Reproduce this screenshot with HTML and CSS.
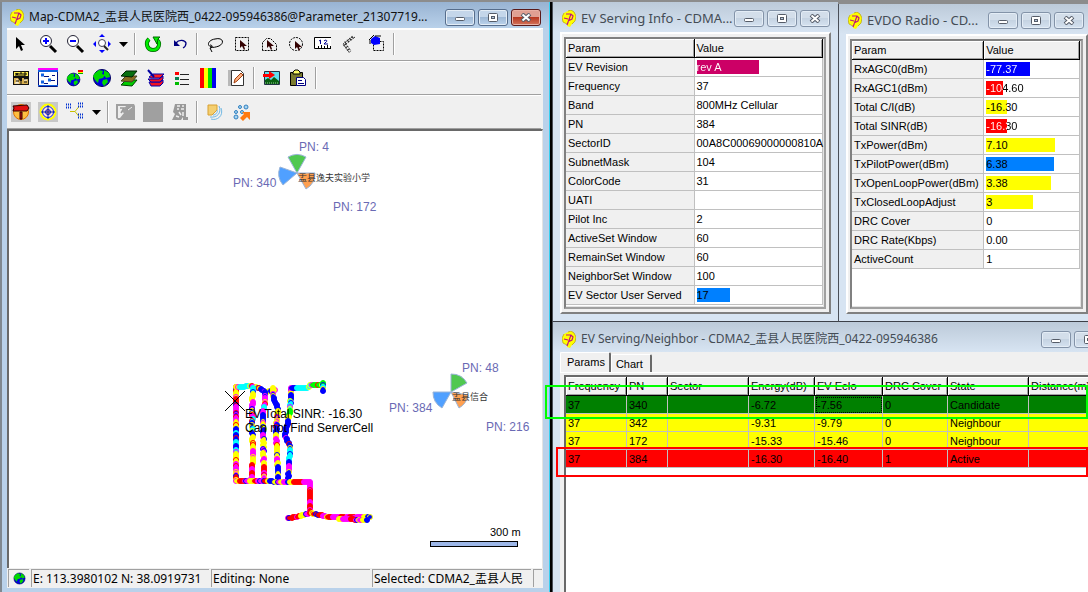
FILE: index.html
```
<!DOCTYPE html>
<html lang="zh-CN">
    <head>
        <meta charset="utf-8">
        <title>Map-CDMA2</title>
        <link rel="stylesheet" href="styles.css">
    </head>
    <body>
        <svg class="defs" aria-hidden="true">
            <symbol id="logo" viewBox="0 0 14 17">
                <path d="M6 1l3-1 3 2 2 4-1 5-3 3-2 3-3-1v-2L1 12 0 7l2-4z" fill="#ff0"/>
                <path d="M6 1l3-1 3 2 2 4-1 5-3 3M5 14L1 12 0 7l2-4" fill="none" stroke="#b8a000" stroke-width=".7"/>
                <path d="M4 4h5l2 2-1 3-4 2M9 4L5 15M2 8l4 1" fill="none" stroke="#c0147c" stroke-width="1.2"/>
            </symbol>
            <symbol id="min" viewBox="0 0 12 9"><rect x="1.5" y="4.5" width="9" height="3" rx="1" fill="#fff" stroke="#555c68"/></symbol>
            <symbol id="max" viewBox="0 0 12 9"><rect x="1.5" y=".5" width="9" height="8" rx="1" fill="#fff" stroke="#555c68"/><rect x="4.500" y="3.500" width="3" height="2" fill="#b8c8dc" stroke="#555c68"/></symbol>
            <symbol id="close" viewBox="0 0 12 9"><path d="M2 1l8 7M10 1L2 8" stroke="#555c68" stroke-width="4"/><path d="M2.500 1.500l7 6M9.500 1.500l-7 6" stroke="#fff" stroke-width="2"/></symbol>
            <symbol id="globe" viewBox="0 0 20 20">
                <circle cx="10" cy="10" r="8.500" fill="#0000e0" stroke="#000060"/>
                <path d="M3 5l4-3 4 1-1 3 3 1-2 3-4 1-1 4-3-3-2-4zM12 2l5 3 1 4-4 1-2-3zM11 12l4-1 1 3-4 4-2-3z" fill="#00d800"/>
            </symbol>
        </svg>

        <main class="desktop">
            <section class="window active map-window">
                <header class="titlebar">
                    <svg class="logo"><use href="#logo"/></svg>
                    <h1>Map-CDMA2_盂县人民医院西_0422-095946386@Parameter_21307719...</h1>
                    <button aria-label="Minimize"><svg><use href="#min"/></svg></button>
                    <button aria-label="Maximize"><svg><use href="#max"/></svg></button>
                    <button class="close" aria-label="Close"><svg><use href="#close"/></svg></button>
                </header>
                <div class="client">
                    <div class="toolbar">
                        <button aria-label="Select"><svg viewBox="0 0 20 20"><path d="M5 3v12l3-3 2 5 2-1-2-5h4z" fill="#000"/></svg></button>
                        <button aria-label="Zoom in"><svg viewBox="0 0 20 20"><path d="M12 12l6 6" stroke="#000" stroke-width="3"/><circle cx="8" cy="7" r="5.500" fill="#fff" stroke="#223"/><path d="M8 4v6M5 7h6" stroke="#00f" stroke-width="2"/></svg></button>
                        <button aria-label="Zoom out"><svg viewBox="0 0 20 20"><path d="M12 12l6 6" stroke="#000" stroke-width="3"/><circle cx="8" cy="7" r="5.500" fill="#fff" stroke="#223"/><path d="M5 7h6" stroke="#00f" stroke-width="2"/></svg></button>
                        <button aria-label="Pan"><svg viewBox="0 0 20 20"><path d="M10 0l3 3H7zM10 19l3-3H7zM1 10l3-3v6zM19 10l-3-3v6z" fill="#00f"/><circle cx="10" cy="9" r="3.500" fill="#fff" stroke="#445"/><path d="M12 12l4 4" stroke="#222" stroke-width="2"/></svg></button>
                        <button class="drop" aria-label="Pan options"><svg viewBox="0 0 9 5"><path d="M0 0h9L4.500 5z"/></svg></button>
                        <hr>
                        <button aria-label="Refresh"><svg viewBox="0 0 20 20"><path d="M6 5c-4 4-2 11 4 11s8-7 4-10" fill="none" stroke="#060" stroke-width="4"/><path d="M6 5c-4 4-2 11 4 11s8-7 4-10" fill="none" stroke="#0e0" stroke-width="2.500"/><path d="M10 3h7l-2 2-1 5z" fill="#0e0" stroke="#060"/></svg></button>
                        <button aria-label="Undo"><svg viewBox="0 0 20 20"><path d="M6 9c3-4 9-3 10 0 0 3-1 4-3 5" fill="none" stroke="#000080" stroke-width="1.300"/><path d="M4 6v6h6z" fill="#000080"/></svg></button>
                        <hr>
                        <button aria-label="Lasso"><svg viewBox="0 0 20 20"><path d="M7 13c-6-1-4-7 3-8 8-2 10 4 4 7-3 1-6 2-9 1M5 11c3 0 3 3 0 3l2 4" fill="none" stroke="#000"/></svg></button>
                        <button aria-label="Select by rectangle"><svg viewBox="0 0 20 20"><path d="M3.500 3.500h13v13h-13z" fill="none" stroke="#000" stroke-dasharray="2 1"/><path d="M8 6v8l2-2 2 4 1-1-1-3h3z" fill="#300"/></svg></button>
                        <button aria-label="Select by polygon"><svg viewBox="0 0 20 20"><path d="M3.500 16.500v-8l4-4h4l6 6v6z" fill="none" stroke="#000" stroke-dasharray="2 1"/><path d="M8 6v8l2-2 2 4 1-1-1-3h3z" fill="#300"/></svg></button>
                        <button aria-label="Select by circle"><svg viewBox="0 0 20 20"><circle cx="10" cy="10" r="6.500" fill="none" stroke="#000" stroke-dasharray="2 1"/><path d="M9 7v8l2-2 2 4 1-1-1-3h3z" fill="#300"/></svg></button>
                        <button aria-label="Ruler"><svg viewBox="0 0 20 20"><path d="M18 3.500H1.500v11H18" fill="#fff" stroke="#000"/><path d="M5.500 12v2M8.500 11v3M11.500 12v2M14.500 11v3M17.500 12v2" stroke="#000"/><path d="M6 7l1.500-1v4M11 7c2-2 4 0 2 1l-2 2h4" fill="none" stroke="#000090"/></svg></button>
                        <button aria-label="Measure"><svg viewBox="0 0 20 20"><path d="M15 3l-9 7 5 7M12 3l-9 7 6 8" fill="none" stroke="#000" stroke-dasharray="1 1"/><path d="M13 3l-9 7 6 8" fill="none" stroke="#222" stroke-dasharray="1 2" stroke-width="3"/></svg></button>
                        <button aria-label="Edit shape"><svg viewBox="0 0 20 20"><path d="M6.500 7.500h10v9h-10z" fill="none" stroke="#000" stroke-dasharray="2 1"/><path d="M4 5l4-3 5 2v6l-6 1-3-2z" fill="#00f"/><path d="M2 6l5-5M8 2h6M3 6v4" stroke="#000"/></svg></button>
                        <hr>
                    </div>
                    <div class="toolbar">
                        <button aria-label="Map search"><svg viewBox="0 0 20 20"><path d="M2 3h16v14H2z" fill="#111"/><path d="M3 4h14v4H3z" fill="#ffee50"/><path d="M5 8V5l1 2 1-2v3M9 8V5h2v3M13 8V5h2v2h-2" fill="none" stroke="#000"/><path d="M3 10h4l2 3h2v-3h2v2l4-1v5H3z" fill="#d8b050"/><path d="M4 15h4M13 12h3M6 11v4" stroke="#fff"/><path d="M5 13h3M10 12v4M13 14h3" stroke="#111"/></svg></button>
                        <button aria-label="Layer window"><svg viewBox="0 0 20 20"><path d="M.500 1.500h19v17H.500z" fill="#fff" stroke="#001080"/><path d="M0 0h20v2H0z" fill="#f0f"/><path d="M0 2h20v2H0zM0 17h20v1H0z" fill="#1060e0"/><path d="M3 7h3M10 12h3M3 14h3" stroke="#1060e0" stroke-width="3"/><path d="M6 8.500h5M13 12.500h4M6 15.500h4M14 7.500h3" stroke="#001080"/></svg></button>
                        <button aria-label="Earth legend"><svg viewBox="0 0 20 20"><use href="#globe" x="1" y="4" width="15" height="15"/><path d="M13 2h5v2h-5z" fill="red"/><path d="M13 4h5v1h-5z" fill="#ff0"/><path d="M13 5h5v1h-5z" fill="#0a0"/></svg></button>
                        <button aria-label="Earth"><svg viewBox="0 0 20 20"><use href="#globe" width="20" height="20"/></svg></button>
                        <button aria-label="Layers"><svg viewBox="0 0 20 20"><path d="M2 17l5-5h11l-5 6z" fill="#0c0" stroke="#040"/><path d="M2 13l5-5h11l-5 6z" fill="#886a20" stroke="#442"/><path d="M2 8l5-5h11l-5 6z" fill="#087010" stroke="#020"/></svg></button>
                        <button aria-label="Map layers"><svg viewBox="0 0 20 20"><path d="M3 14h11l3-2v3l-3 3H5z" fill="#f01020" stroke="#0000b0"/><path d="M2 11h11l4-3v3l-3 3H5z" fill="#f01020" stroke="#0000b0"/><path d="M3 9l4-3h11l-4 4H5z" fill="#ff2020" stroke="#0000b0"/><path d="M2 2l6 7" stroke="#0000a0" stroke-width="2"/></svg></button>
                        <button aria-label="Legend"><svg viewBox="0 0 20 20"><path d="M2 4h4v3H2z" fill="red"/><path d="M2 9h4v3H2z" fill="#0a8050"/><path d="M2 14h4v3H2z" fill="#0b0"/><path d="M7 6.500h9M7 11.500h9M7 16.500h9" stroke="#222"/></svg></button>
                        <button aria-label="Colour bars"><svg viewBox="0 0 20 20"><path d="M0 0h4v20H0z" fill="red"/><path d="M4 0h4v20H4z" fill="#ff0"/><path d="M8 0h4v20H8z" fill="#0d0"/><path d="M12 0h4v20h-4z" fill="#00e"/></svg></button>
                        <button aria-label="Edit note"><svg viewBox="0 0 20 20"><path d="M1 2h4v16H1z" fill="#b8b8b8"/><path d="M4.500 2.500h9l3 3v12h-12z" fill="#fff" stroke="#333"/><path d="M7 15l1-4 6-6 2 2-6 6z" fill="#ffb080" stroke="#a04010"/></svg></button>
                        <hr>
                        <button aria-label="Export picture"><svg viewBox="0 0 20 20"><path d="M2.500 3.500h15v13h-15z" fill="#60e0f0" stroke="#234"/><path d="M3 12l3-2 3 2 3-3 5 4v3H3z" fill="#086010"/><path d="M3 15h14" stroke="#9c9" stroke-dasharray="1 1"/><path d="M1 6h6V3l6 4-6 4V9H1z" fill="red"/></svg></button>
                        <button aria-label="Paste"><svg viewBox="0 0 20 20"><path d="M1.500 4.500h12v13h-12z" fill="#7b7b30" stroke="#000"/><path d="M4 6V4l2-2h3l2 2v2z" fill="#ff6" stroke="#000"/><path d="M7.500 9.500h7l2 2v6h-9z" fill="#fff" stroke="#000080"/><path d="M9 12.500h4M9 15.500h6" stroke="#000080"/></svg></button>
                        <hr>
                    </div>
                    <div class="toolbar">
                        <button class="on" aria-label="Direction"><svg viewBox="0 0 20 20"><circle cx="10" cy="10" r="7.500" fill="#ffc040" stroke="#e07000"/><path d="M2 4l14-1 2 3-2 3H2l1-3z" fill="#e01010" stroke="#300"/><path d="M9 10h2v7H9z" fill="#c01010" stroke="#300"/></svg></button>
                        <button class="on" aria-label="Locate"><svg viewBox="0 0 20 20"><circle cx="10" cy="10" r="7.500" fill="#ffe0d8" stroke="#ff0" stroke-width="2"/><circle cx="10" cy="10" r="5.500" fill="none" stroke="#0020e0"/><circle cx="10" cy="10" r="2.500" fill="#ff9090" stroke="#0020e0"/><path d="M10 3v14M3 10h14" stroke="#0020a0"/></svg></button>
                        <button aria-label="Link cells"><svg viewBox="0 0 20 20"><path d="M5 9.500h5l4-5M10 9.500l4 5" fill="none" stroke="#c8c000"/><path d="M1 2.500h5M1 5.500h5M13 1.500h5M13 4.500h5M13 12.500h5M13 15.500h5" stroke="#0030d0" stroke-width="2" stroke-dasharray="1 1"/></svg></button>
                        <button class="drop" aria-label="Link options"><svg viewBox="0 0 9 5"><path d="M0 0h9L4.500 5z"/></svg></button>
                        <hr>
                        <button disabled aria-label="Image"><svg viewBox="0 0 20 20"><path d="M0 2h18l1 2v14H2l-2-2z" fill="#a0a0a0"/><path d="M2 4h8l-4 6 2 1-4 5H2z" fill="#eee"/><path d="M4 6h4l-3 5M11 8l5-4" fill="none" stroke="#999" stroke-width="1.500"/><path d="M12 8l4-3" stroke="#eee"/></svg></button>
                        <button disabled aria-label="Fill"><svg viewBox="0 0 20 20"><path d="M0 0h20v20H0z" fill="#a0a0a0"/></svg></button>
                        <button disabled aria-label="Report"><svg viewBox="0 0 20 20"><path d="M5 2h11v13h2v3h-5v-3l-2 3H2l3-6-2-2z" fill="#999"/><path d="M7 4h3M12 4h2M7 7h2M11 7h3M9 10l2 3M13 10v4M6 14l3 1" stroke="#eee" stroke-width="1.500"/></svg></button>
                        <hr>
                        <button aria-label="Coverage"><svg viewBox="0 0 20 20"><path d="M3 3h9v5l-5 5H3z" fill="#f4cf70" stroke="#d8a030"/><path d="M14 4c3 7-2 12-9 11M16 6c3 8-4 13-10 11M12 8c1 2-1 5-4 5" fill="none" stroke="#70b8e4"/></svg></button>
                        <button aria-label="Handover"><svg viewBox="0 0 20 20"><g fill="#a8d4f0" stroke="#3080c0"><circle cx="8" cy="5" r="1.500"/><circle cx="14" cy="5" r="2"/><circle cx="4" cy="10" r="1.500"/><circle cx="10" cy="10" r="1.500"/><circle cx="4" cy="15" r="2"/></g><path d="M8 16l4-4-2-2h8v8l-3-3-4 4z" fill="#ff7a10"/></svg></button>
                    </div>
                    <svg class="map" role="img" aria-label="Drive test map">
                        <g class="sectors">
                            <path class="green" d="M288 42l-9-16a18 18 0 0 1 18 0z"/>
                            <path class="blue" d="M288 42l-17-6a18 18 0 0 0 3 18z"/>
                            <path class="orange" d="M288 42h18a18 18 0 0 1-9 16z"/>
                            <path class="green" d="M442 261v-18a18 18 0 0 1 16 9z"/>
                            <path class="blue" d="M442 261h-18a18 18 0 0 0 9 16z"/>
                            <path class="orange" d="M442 261l17 3a18 18 0 0 1-9 13z"/>
                        </g>
                        <g class="pn">
                            <text x="290" y="20">PN: 4</text>
                            <text x="224" y="56">PN: 340</text>
                            <text x="324" y="80">PN: 172</text>
                            <text x="453" y="241">PN: 48</text>
                            <text x="380" y="281">PN: 384</text>
                            <text x="477" y="300">PN: 216</text>
                        </g>
                        <g class="site">
                            <text x="289" y="50">盂县逸夫实验小学</text>
                            <text x="443" y="269">盂县信合</text>
                        </g>
                        <g id="track"></g>
                        <path d="M216 260l20 20M236 260l-20 20" stroke="#000"/>
                        <g class="note">
                            <text x="236" y="287">EV Total SINR: -16.30</text>
                            <text x="236" y="301">Can not Find ServerCell</text>
                        </g>
                        <text class="scale" x="481" y="405">300 m</text>
                        <rect x="421.500" y="410.500" width="87" height="5" fill="#9db7e8" stroke="#000"/>
                    </svg>
                    <footer class="statusbar">
                        <span class="status-icon"><svg><use href="#globe"/></svg></span>
                        <span class="status-pos">E: 113.3980102 N: 38.0919731</span>
                        <span class="status-edit">Editing: None</span>
                        <span class="status-sel">Selected: CDMA2_盂县人民</span>
                        <span class="status-end"></span>
                    </footer>
                </div>
            </section>

            <section class="window info-window">
                <header class="titlebar">
                    <svg class="logo"><use href="#logo"/></svg>
                    <h2>EV Serving Info - CDMA...</h2>
                    <button aria-label="Minimize"><svg><use href="#min"/></svg></button>
                    <button aria-label="Maximize"><svg><use href="#max"/></svg></button>
                    <button aria-label="Close"><svg><use href="#close"/></svg></button>
                </header>
                <div class="panel">
                    <div class="list">
                        <table class="params">
                            <thead><tr><th>Param</th><th>Value</th></tr></thead>
                            <tbody>
                                <tr><th>EV Revision</th><td><span class="meter pink" style="--fill: 62px"><span>rev A</span></span></td></tr>
                                <tr><th>Frequency</th><td>37</td></tr>
                                <tr><th>Band</th><td>800MHz Cellular</td></tr>
                                <tr><th>PN</th><td>384</td></tr>
                                <tr><th>SectorID</th><td>00A8C00069000000810A</td></tr>
                                <tr><th>SubnetMask</th><td>104</td></tr>
                                <tr><th>ColorCode</th><td>31</td></tr>
                                <tr><th>UATI</th><td></td></tr>
                                <tr><th>Pilot Inc</th><td>2</td></tr>
                                <tr><th>ActiveSet Window</th><td>60</td></tr>
                                <tr><th>RemainSet Window</th><td>60</td></tr>
                                <tr><th>NeighborSet Window</th><td>100</td></tr>
                                <tr><th>EV Sector User Served</th><td><span class="meter sky" style="--fill: 33px">17</span></td></tr>
                            </tbody>
                        </table>
                    </div>
                </div>
            </section>

            <section class="window radio-window">
                <header class="titlebar">
                    <svg class="logo"><use href="#logo"/></svg>
                    <h2>EVDO Radio - CD...</h2>
                    <button aria-label="Minimize"><svg><use href="#min"/></svg></button>
                    <button aria-label="Maximize"><svg><use href="#max"/></svg></button>
                    <button aria-label="Close"><svg><use href="#close"/></svg></button>
                </header>
                <div class="panel">
                    <div class="list">
                        <table class="params">
                            <thead><tr><th>Param</th><th>Value</th></tr></thead>
                            <tbody>
                                <tr><th>RxAGC0(dBm)</th><td><span class="meter navy" style="--fill: 44px"><span>-77.37</span></span></td></tr>
                                <tr><th>RxAGC1(dBm)</th><td><span class="meter red" style="--fill: 17px"><span>-104.60</span></span></td></tr>
                                <tr><th>Total C/I(dB)</th><td><span class="meter yellow" style="--fill: 21px">-16.30</span></td></tr>
                                <tr><th>Total SINR(dB)</th><td><span class="meter red" style="--fill: 21px"><span>-16.30</span></span></td></tr>
                                <tr><th>TxPower(dBm)</th><td><span class="meter yellow" style="--fill: 69px">7.10</span></td></tr>
                                <tr><th>TxPilotPower(dBm)</th><td><span class="meter sky" style="--fill: 68px">6.38</span></td></tr>
                                <tr><th>TxOpenLoopPower(dBm)</th><td><span class="meter yellow" style="--fill: 65px">3.38</span></td></tr>
                                <tr><th>TxClosedLoopAdjust</th><td><span class="meter yellow" style="--fill: 47px">3</span></td></tr>
                                <tr><th>DRC Cover</th><td>0</td></tr>
                                <tr><th>DRC Rate(Kbps)</th><td>0.00</td></tr>
                                <tr><th>ActiveCount</th><td>1</td></tr>
                            </tbody>
                        </table>
                    </div>
                </div>
            </section>

            <div class="neighbor-area">
                <section class="window neighbor-window">
                    <header class="titlebar">
                        <svg class="logo"><use href="#logo"/></svg>
                        <h2 class="long">EV Serving/Neighbor - CDMA2_盂县人民医院西_0422-095946386</h2>
                        <button aria-label="Minimize"><svg><use href="#min"/></svg></button>
                        <button aria-label="Maximize"><svg><use href="#max"/></svg></button>
                        <button aria-label="Close"><svg><use href="#close"/></svg></button>
                    </header>
                    <div class="tabs">
                        <button class="tab current">Params</button>
                        <button class="tab">Chart</button>
                    </div>
                    <div class="page">
                        <div class="cell-list">
                            <table class="cells">
                                <thead>
                                    <tr><th class="c-freq">Frequency</th><th class="c-pn">PN</th><th class="c-sector">Sector</th><th class="c-energy">Energy(dB)</th><th class="c-ecio">EV EcIo</th><th class="c-drc">DRC Cover</th><th class="c-state">State</th><th>Distance(m)</th></tr>
                                </thead>
                                <tbody>
                                    <tr class="candidate"><td>37</td><td>340</td><td></td><td>-6.72</td><td class="focus">-7.56</td><td>0</td><td>Candidate</td><td></td></tr>
                                    <tr class="neighbour"><td>37</td><td>342</td><td></td><td>-9.31</td><td>-9.79</td><td>0</td><td>Neighbour</td><td></td></tr>
                                    <tr class="neighbour"><td>37</td><td>172</td><td></td><td>-15.33</td><td>-15.46</td><td>0</td><td>Neighbour</td><td></td></tr>
                                    <tr class="serving"><td>37</td><td>384</td><td></td><td>-16.30</td><td>-16.40</td><td>1</td><td>Active</td><td></td></tr>
                                </tbody>
                            </table>
                        </div>
                    </div>
                </section>
                <div class="mark mark-green"></div>
                <div class="mark mark-red"></div>
            </div>
        </main>
        <script src="track.js"></script>
    </body>
</html>
```

FILE: styles.css
```
* {
    box-sizing: border-box;
}
html, body {
    height: 100%;
    margin: 0;
}
body {
    overflow: hidden;
    background: #8c8c8c;
    color: #000;
    font: 11px/16px "Liberation Sans", sans-serif;
}
button {
    padding: 0;
    border: 0;
    background: none;
    font: inherit;
    color: inherit;
}
.defs {
    position: absolute;
    width: 0;
    height: 0;
}
.desktop {
    display: grid;
    grid-template-columns: 552fr 286fr 250fr;
    grid-template-rows: 320px minmax(0, 1fr);
    height: 100%;
    padding-top: 2px;
    overflow: hidden;
}

/* windows */
.window {
    display: flex;
    flex-direction: column;
    min-width: 0;
    padding: 0 7px 7px;
    border-left: 1px solid #4a4f58;
    border-bottom: 1px solid #3c4048;
    background: #d7e4f2;
}
.titlebar {
    display: flex;
    align-items: center;
    gap: 3px;
    height: 30px;
    margin: 0 -7px;
    padding: 2px 8px 0 9px;
    flex: none;
    background: linear-gradient(#bccad9, #d7e4f2);
}
.titlebar h1, .titlebar h2 {
    flex: 1;
    min-width: 0;
    margin: 0 -2px 0 2px;
    overflow: hidden;
    white-space: nowrap;
    font: 13px/20px "Noto Sans", "Noto Sans CJK SC", sans-serif;
    color: #444c55;
}
.titlebar h1, .titlebar .long {
    font-size: 12px;
}
.titlebar button {
    display: flex;
    align-items: center;
    justify-content: center;
    flex: none;
    width: 30px;
    height: 17px;
    border: 1px solid #8393a8;
    border-radius: 3px;
    background: linear-gradient(#d3deea 50%, #c5d3e2 50%, #d5e2f0);
    box-shadow: inset 0 0 0 1px #e4edf6;
}
.titlebar button svg {
    width: 12px;
    height: 9px;
}
.logo {
    flex: none;
    width: 14px;
    height: 17px;
}
.active {
    background: #b9d1ea;
}
.active .titlebar {
    background: linear-gradient(#98b3d2, #b9d1ea);
}
.active .titlebar h1 {
    color: #111;
}
.active .titlebar button {
    border-color: #566d8c;
    background: linear-gradient(#c4d6ea 50%, #9fb9d6 50%, #bcd3ec);
}
.active .titlebar .close {
    border-color: #5b1a1a;
    background: linear-gradient(#e0a093 50%, #b83a22 50%, #d4745c);
    box-shadow: inset 0 0 0 1px #e8b0a4;
}

/* map window */
.map-window {
    grid-row: 1 / 3;
    padding: 0 7px 4px 5px;
    border-left: 2px solid #808890;
    border-right: 2px solid #000;
    border-bottom: 0;
    box-shadow: inset -1px 0 #38d0f0;
}
.map-window .titlebar {
    height: 26px;
    margin: 0 -6px 0 -5px;
    padding: 4px 8px 0 8px;
}
.client {
    display: flex;
    flex-direction: column;
    flex: 1;
    min-height: 0;
    background: #f0f0f0;
    border-top: 1px solid #fff;
}
.toolbar {
    display: flex;
    align-items: center;
    flex: none;
    height: 34px;
    margin: 0 2px 0 0;
    border-top: 1px solid #fff;
    border-bottom: 1px solid #a0a0a0;
}
.toolbar:first-child {
    height: 32px;
    padding-bottom: 2px;
}
.toolbar button {
    display: flex;
    align-items: center;
    justify-content: center;
    width: 27px;
    height: 20px;
}
.toolbar button svg {
    width: 20px;
    height: 20px;
}
.toolbar .on svg {
    background: #c8c8c8;
}
.toolbar .drop {
    width: 16px;
}
.toolbar .drop svg {
    width: 9px;
    height: 5px;
}
.toolbar hr {
    width: 2px;
    height: 22px;
    margin: 0 3px;
    border: 0;
    border-left: 1px solid #a0a0a0;
    border-right: 1px solid #fff;
}
.map {
    flex: 1;
    width: 100%;
    min-height: 0;
    background: #fff;
    border-top: 2px solid #696969;
    border-left: 2px solid #696969;
    border-right: 1px solid #e3e3e3;
}
.sectors path {
    stroke: #9ab4d8;
}
.sectors .green {
    fill: #50c850;
}
.sectors .blue {
    fill: #50a0ff;
}
.sectors .orange {
    fill: #ffa050;
}
.pn text, .note text {
    font: 12px "Liberation Sans", sans-serif;
}
.pn {
    fill: #6a6ab4;
}
.site text {
    font: 9px "Noto Sans CJK SC", sans-serif;
    fill: #333;
}
.scale {
    font: 11px "Liberation Sans", sans-serif;
}
.statusbar {
    display: flex;
    gap: 2px;
    flex: none;
    height: 20px;
    padding: 1px;
    font: 12px/17px "Noto Sans", "Noto Sans CJK SC", sans-serif;
}
.statusbar span {
    overflow: hidden;
    padding: 0 1px;
    white-space: nowrap;
    border-top: 1px solid #a0a0a0;
    border-left: 1px solid #a0a0a0;
}
.statusbar .status-icon {
    width: 21px;
    padding: 2px 4px;
}
.status-icon svg {
    display: block;
    width: 13px;
    height: 13px;
}
.status-pos {
    width: 178px;
}
.status-edit, .status-sel {
    flex: 1;
}
.status-end {
    width: 9px;
}

/* param lists */
.panel {
    display: flex;
    flex: 1;
    min-height: 0;
    padding: 3px 3px 3px 2px;
    background: #f0f0f0;
    border: 2px solid;
    border-color: #fff #808080 #808080 #fff;
}
.list {
    flex: 1;
    min-width: 0;
    padding-right: 1px;
    background: #fff;
    border: 2px solid;
    border-color: #808080 #a0a0a0 #a0a0a0 #808080;
    box-shadow: inset -1px -1px #e3e3e3;
}
table {
    width: 100%;
    border-spacing: 0;
    table-layout: fixed;
}
th, td {
    padding: 0 2px;
    border-right: 1px solid #c0c0c0;
    border-bottom: 1px solid #c0c0c0;
    text-align: left;
    font-weight: normal;
    white-space: nowrap;
}
th {
    background: #f0f0f0;
}
thead th {
    border-color: #000;
    box-shadow: inset 1px 1px #fff, inset -1px -1px #a0a0a0;
}
.params th, .params td {
    height: 19px;
}
.radio-window {
    margin-top: 2px;
    padding-right: 0;
}
.radio-window .titlebar {
    margin-right: 0;
    padding-right: 4px;
}
.radio-window .params thead th:first-child {
    width: 58%;
}
.meter {
    display: block;
    height: 14px;
    line-height: 14px;
    background-repeat: no-repeat;
    background-size: var(--fill) 100%;
}
/* text is white on the bar, black past its end */
.meter span {
    display: block;
    color: transparent;
    background: linear-gradient(90deg, #fff var(--fill), #000 var(--fill));
    -webkit-background-clip: text;
    background-clip: text;
}
.pink {
    background-image: linear-gradient(#cc0066, #cc0066);
}
.sky {
    background-image: linear-gradient(#0080ff, #0080ff);
}
.navy {
    background-image: linear-gradient(#00f, #00f);
}
.red {
    background-image: linear-gradient(#f00, #f00);
}
.yellow {
    background-image: linear-gradient(#ff0, #ff0);
}

/* neighbor window */
.neighbor-area {
    position: relative;
    grid-column: 2 / 4;
    min-width: 0;
}
.neighbor-window {
    height: 100%;
    margin-right: -57px;
    padding-bottom: 0;
    border-bottom: 0;
}
.neighbor-window .titlebar {
    padding-top: 4px;
}
.tabs {
    display: flex;
    align-items: flex-end;
    flex: none;
    height: 20px;
    background: #f0f0f0;
}
.tab {
    height: 18px;
    padding: 0 7px 0 4px;
    border: solid;
    border-width: 1px 2px 0 1px;
    border-color: #fff #696969 #fff #fff;
    border-radius: 2px 2px 0 0;
}
.tab.current {
    height: 20px;
    padding: 0 4px 2px 6px;
}
.page {
    flex: 1;
    display: flex;
    min-height: 0;
    padding: 2px 4px 0;
    background: #f0f0f0;
    border-top: 1px solid #fff;
}
.cell-list {
    flex: 1;
    background: #fff;
    border-top: 2px solid #696969;
    border-left: 2px solid #696969;
}
.cells th {
    height: 19px;
}
.cells td {
    height: 18px;
}
.candidate {
    background: #008000;
}
.neighbour {
    background: #ff0;
}
.serving {
    background: #f00;
}
.focus {
    outline: 1px dotted #000;
    outline-offset: -2px;
}
.c-freq {
    width: 61px;
}
.c-pn {
    width: 41px;
}
.c-sector {
    width: 81px;
}
.c-energy {
    width: 66px;
}
.c-ecio {
    width: 68px;
}
.c-drc {
    width: 65px;
}
.c-state {
    width: 81px;
}
.mark {
    position: absolute;
    right: 0;
    border: 2px solid;
}
.mark-green {
    top: 63px;
    left: -7px;
    height: 34px;
    border-color: #0f0;
}
.mark-red {
    top: 125px;
    left: 4px;
    height: 30px;
    border-color: #f00;
}
```

FILE: track.js
```
var colors = { y: "#ff0", c: "#0ff", m: "#f0f", r: "#f00", b: "#00f", g: "#0f0" };

// points of each leg, then the colours met along it
var legs = [
    [[227, 256, 227, 351], "yyyrrmmbmyybcbbcbcyyymmmry"],
    [[227, 256, 243, 255, 250, 257, 256, 261, 268, 258], "ycccmyybmyby"],
    [[244, 257, 243, 290, 244, 320, 242, 350], "cyymmymcbcbyyymmyrmrm"],
    [[256, 261, 254, 290, 255, 350], "bmmcmbyybmyymymyrmm"],
    [[264, 257, 265, 269, 269, 278, 267, 300, 269, 350], "ybbbbymmbbymyyymybyb"],
    [[282, 258, 281, 280, 276, 305, 281, 315, 279, 351], "ybccgybbbbbbccbmbb"],
    [[282, 257, 298, 257, 301, 254, 315, 254], "bccccggg"],
    [[314, 252, 314, 262], "gcbb"],
    [[227, 350, 301, 351], "yrmmyrmmrybymymbyrrrmm"],
    [[301, 351, 301, 383], "mmmrrrmrrr"],
    [[279, 387, 288, 386, 301, 382, 320, 386, 363, 386], "rrrymrrrmrmmrmrmmyb"],
    [[330, 388, 360, 389], "ymmrmmyb"]
];

var track = document.getElementById("track");
var seed = 7;
var random = () => {
    seed = (seed * 16807) % 2147483647;
    return seed / 2147483647;
}

legs.forEach(([points, codes]) => {
    var spots = [];
    for (var i = 0; i + 3 < points.length; i += 2) {
        var dx = points[i + 2] - points[i], dy = points[i + 3] - points[i + 1];
        var steps = Math.max(1, Math.round(Math.hypot(dx, dy) / 2));
        for (var s = 0; steps > s; s++)
            spots.push([points[i] + dx * s / steps, points[i + 1] + dy * s / steps]);
    }
    spots.forEach(([x, y], n) => {
        var code = codes[Math.floor(n / spots.length * codes.length)];
        var ring = random() < 0.35 ? "ymbr"[Math.floor(random() * 4)] : code;
        var dot = document.createElementNS("http://www.w3.org/2000/svg", "circle");
        dot.setAttribute("cx", Math.round(x + random() - 0.5));
        dot.setAttribute("cy", Math.round(y));
        dot.setAttribute("r", 2.5);
        dot.setAttribute("fill", colors[code]);
        dot.setAttribute("stroke", colors[ring]);
        track.appendChild(dot);
    })
})
```
